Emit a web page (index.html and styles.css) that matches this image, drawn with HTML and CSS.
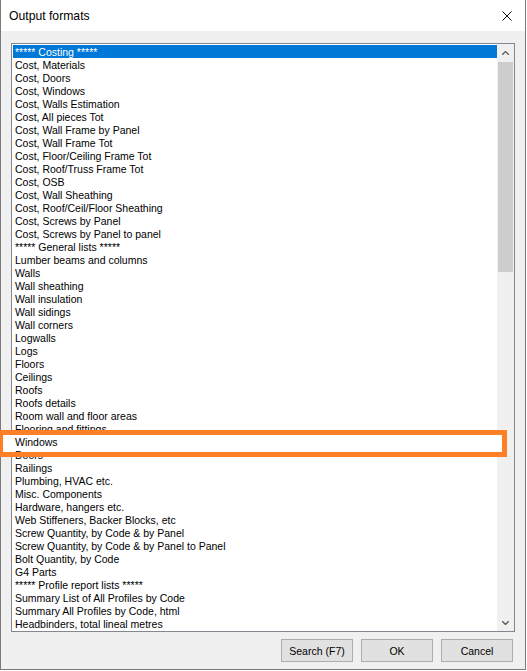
FILE: index.html
```html
<!DOCTYPE html>
<html lang="en">
<head>
<meta charset="UTF-8" />
<meta name="viewport" content="width=device-width, initial-scale=1.0" />
<title>Output formats</title>
<link rel="stylesheet" href="styles.css">
</head>
<body>

<div class="dialog">
  <div class="titlebar">
    <span class="title">Output formats</span>
    <svg class="close" viewBox="0 0 10 10" width="10" height="10">
      <path d="M0.5 0.5 L9.5 9.5 M9.5 0.5 L0.5 9.5" stroke="#111" stroke-width="1" fill="none"/>
    </svg>
  </div>

  <div class="content">
    <div class="listbox">
      <ul class="items">
        <li class="selected">***** Costing *****</li>
        <li>Cost, Materials</li>
        <li>Cost, Doors</li>
        <li>Cost, Windows</li>
        <li>Cost, Walls Estimation</li>
        <li>Cost, All pieces Tot</li>
        <li>Cost, Wall Frame by Panel</li>
        <li>Cost, Wall Frame Tot</li>
        <li>Cost, Floor/Ceiling Frame Tot</li>
        <li>Cost, Roof/Truss Frame Tot</li>
        <li>Cost, OSB</li>
        <li>Cost, Wall Sheathing</li>
        <li>Cost, Roof/Ceil/Floor Sheathing</li>
        <li>Cost, Screws by Panel</li>
        <li>Cost, Screws by Panel to panel</li>
        <li>***** General lists *****</li>
        <li>Lumber beams and columns</li>
        <li>Walls</li>
        <li>Wall sheathing</li>
        <li>Wall insulation</li>
        <li>Wall sidings</li>
        <li>Wall corners</li>
        <li>Logwalls</li>
        <li>Logs</li>
        <li>Floors</li>
        <li>Ceilings</li>
        <li>Roofs</li>
        <li>Roofs details</li>
        <li>Room wall and floor areas</li>
        <li>Flooring and fittings</li>
        <li>Windows</li>
        <li>Doors</li>
        <li>Railings</li>
        <li>Plumbing, HVAC etc.</li>
        <li>Misc. Components</li>
        <li>Hardware, hangers etc.</li>
        <li>Web Stiffeners, Backer Blocks, etc</li>
        <li>Screw Quantity, by Code &amp; by Panel</li>
        <li>Screw Quantity, by Code &amp; by Panel to Panel</li>
        <li>Bolt Quantity, by Code</li>
        <li>G4 Parts</li>
        <li>***** Profile report lists *****</li>
        <li>Summary List of All Profiles by Code</li>
        <li>Summary All Profiles by Code, html</li>
        <li>Headbinders, total lineal metres</li>
      </ul>

      <div class="scrollbar">
        <div class="scroll-btn">
          <svg viewBox="0 0 7 4" width="7" height="4"><path d="M0 4 L3.5 0.5 L7 4" stroke="#606060" stroke-width="1.4" fill="none"/></svg>
        </div>
        <div class="track"><div class="thumb"></div></div>
        <div class="scroll-btn">
          <svg viewBox="0 0 7 4" width="7" height="4"><path d="M0 0 L3.5 3.5 L7 0" stroke="#606060" stroke-width="1.4" fill="none"/></svg>
        </div>
      </div>
    </div>

    <div class="buttons">
      <button>Search (F7)</button>
      <button>OK</button>
      <button>Cancel</button>
    </div>
  </div>
</div>

<!-- highlight frame drawn over the "Windows" row -->
<div class="callout"></div>

</body>
</html>
```

FILE: styles.css
```css
:root {
  --dlg-bg: #f0f0f0;
  --list-border: #828790;
  --select-blue: #0078d7;
  --callout: #ff7f27;
  --font-ui: 'Liberation Sans', Arial, sans-serif;
}

body {
  margin: 0;
  background: #fff;
  font-family: var(--font-ui);
  color: #000;
}

.dialog {
  width: 526px;
  height: 670px;
  box-sizing: border-box;
  border: 1px solid #7a7a7a;
  border-top: none;
  background: var(--dlg-bg);
  display: flex;
  flex-direction: column;
}

.titlebar {
  height: 31px;
  background: #fff;
  display: flex;
  align-items: center;
  justify-content: space-between;
  padding: 0 13px 0 8px;
}
.title { font-size: 12.2px; padding-top: 1px; }
.close { display: block; }

.content {
  flex: 1;
  padding: 12px 10px 0 10px;
}

.listbox {
  width: 504px;
  height: 589px;
  box-sizing: border-box;
  border: 1px solid var(--list-border);
  background: #fff;
  display: flex;
}

.items {
  list-style: none;
  margin: 0;
  padding: 1px 0 0 1px;
  width: 485px;
  overflow: hidden;
  font-size: 10.5px;
}
.items li {
  height: 12px;
  padding-top: 1px;
  line-height: 13px;
  padding-left: 2px;
  white-space: nowrap;
}
.items li.selected { background: var(--select-blue); color: #fff; }

.scrollbar {
  width: 17px;
  background: var(--dlg-bg);
  display: flex;
  flex-direction: column;
}
.scroll-btn {
  height: 17px;
  display: flex;
  align-items: center;
  justify-content: center;
}
.track { flex: 1; padding: 1px 1px 0 1px; }
.thumb { height: 210px; background: #cdcdcd; }

.buttons {
  display: flex;
  justify-content: flex-end;
  gap: 8px;
  margin-top: 7px;
  padding-right: 2px;
}
.buttons button {
  width: 72px;
  height: 23px;
  box-sizing: border-box;
  border: 1px solid #adadad;
  background: #e1e1e1;
  font-family: var(--font-ui);
  font-size: 10.5px;
  color: #000;
  padding: 0;
}

.callout {
  position: absolute;
  left: -2px;
  top: 430px;
  width: 509px;
  height: 27px;
  box-sizing: border-box;
  border: 5px solid var(--callout);
}
/* white fill over the list edge and the scrollbar track inside the frame */
.callout::before,
.callout::after {
  content: "";
  position: absolute;
  top: 0;
  bottom: 0;
  background: #fff;
}
.callout::before { left: 0; width: 10px; }
.callout::after { right: 0; width: 5px; }
```
